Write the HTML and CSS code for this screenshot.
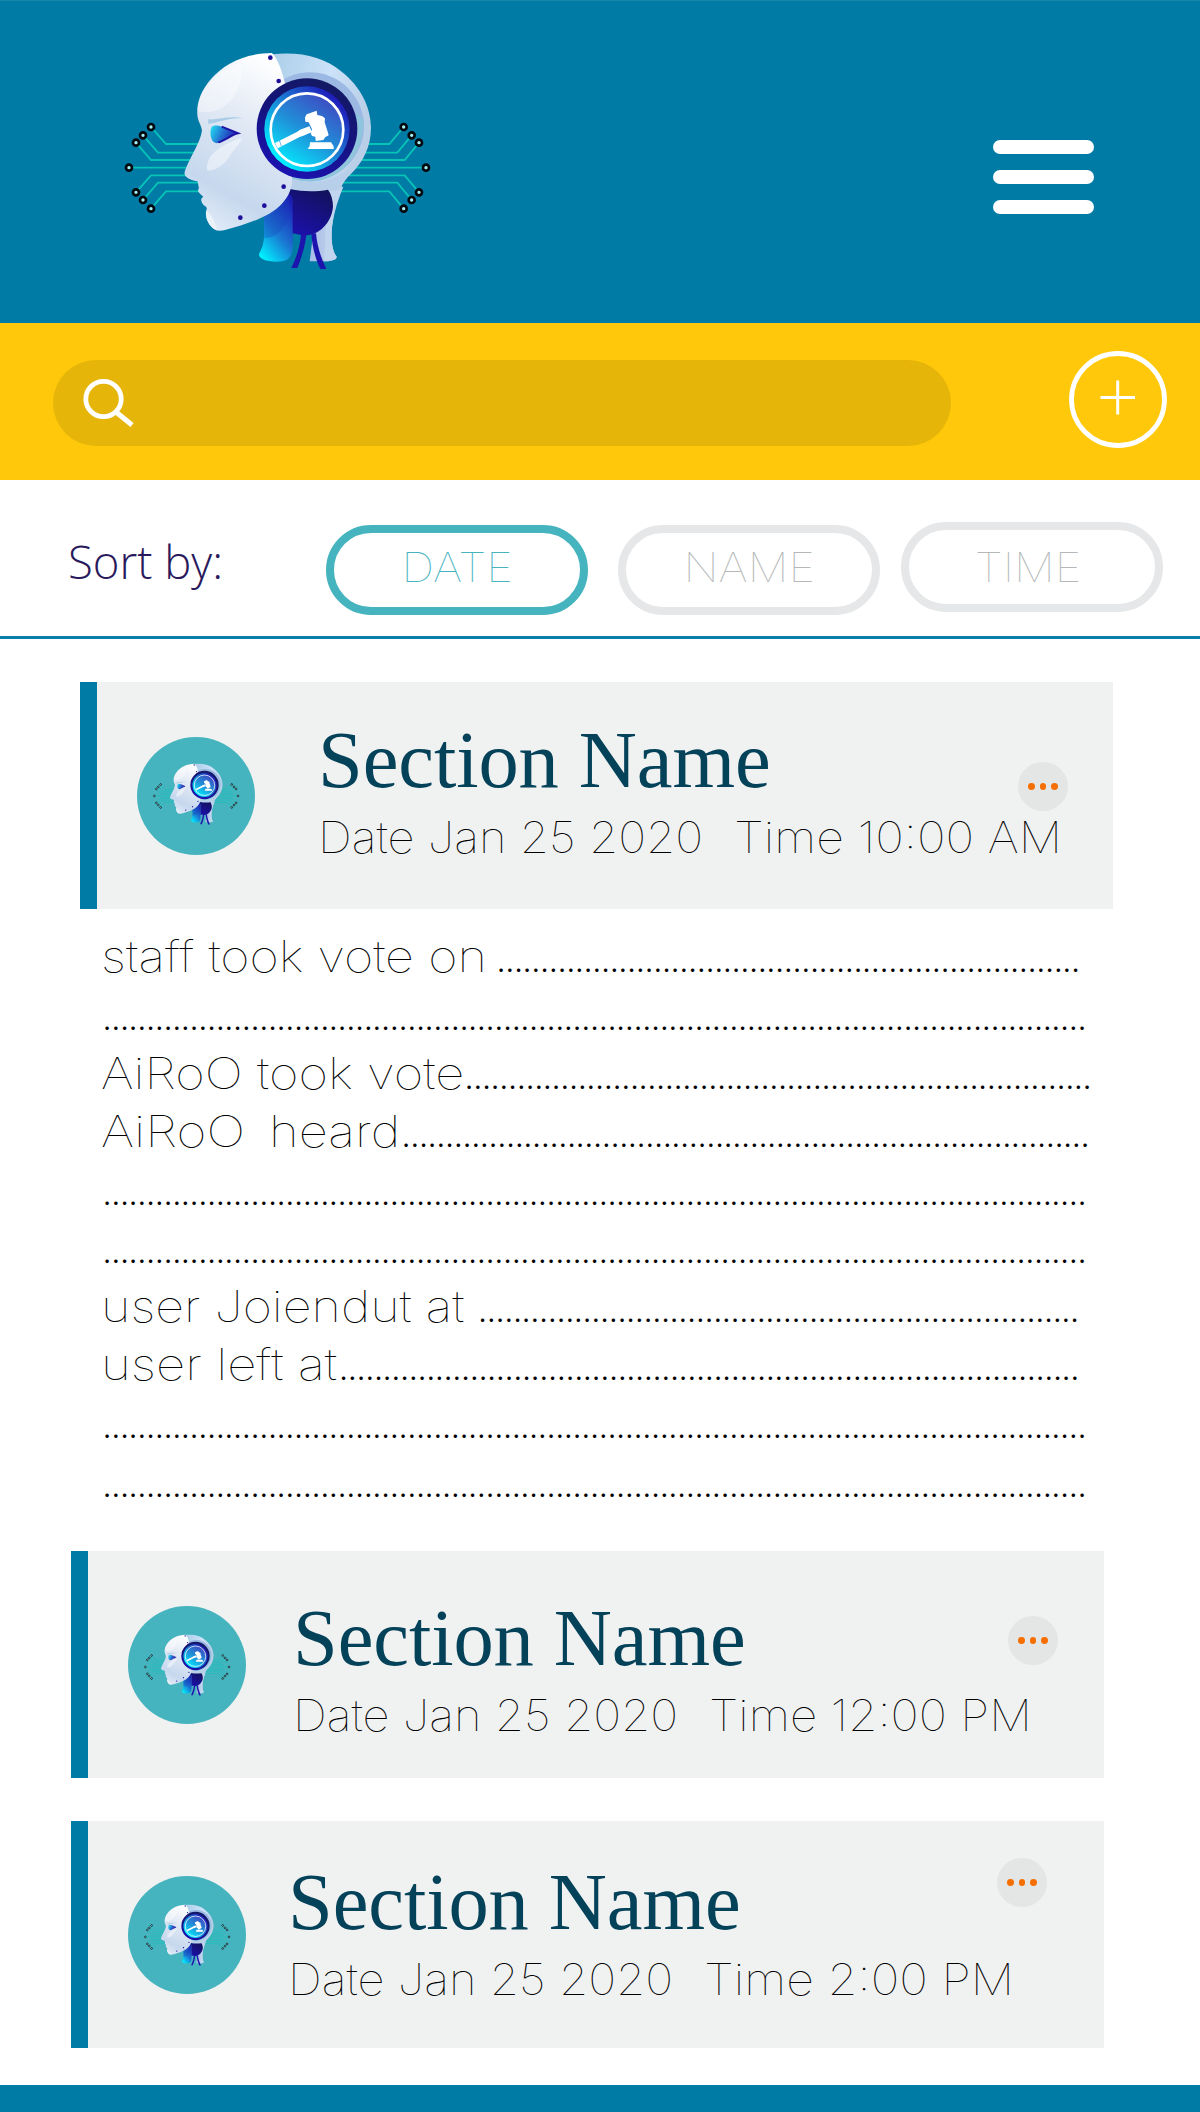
FILE: index.html
```html
<!DOCTYPE html>
<html lang="en">
<head>
<meta charset="utf-8">
<title>Sections</title>
<link rel="stylesheet" href="styles.css">
</head>
<body>
<svg class="defs" width="0" height="0" aria-hidden="true">
  <defs>
    <linearGradient id="face" x1="0.7" y1="0" x2="0.35" y2="1"><stop offset="0" stop-color="#fff"/><stop offset="0.45" stop-color="#dde6f3"/><stop offset="0.8" stop-color="#c6d8ee"/><stop offset="1" stop-color="#dfe9f6"/></linearGradient>
    <linearGradient id="skull" x1="0" y1="0" x2="1" y2="0.3"><stop offset="0" stop-color="#a9cce8"/><stop offset="0.6" stop-color="#cbe2f8"/><stop offset="1" stop-color="#b9cfe8"/></linearGradient>
    <linearGradient id="nape" x1="0" y1="0" x2="1" y2="0"><stop offset="0" stop-color="#a9bce8"/><stop offset="0.5" stop-color="#b9cbea"/><stop offset="1" stop-color="#c6d8ef"/></linearGradient>
    <linearGradient id="ring" x1="0.7" y1="0" x2="0.3" y2="1"><stop offset="0" stop-color="#131a62"/><stop offset="0.45" stop-color="#15137c"/><stop offset="1" stop-color="#1c12b4"/></linearGradient>
    <linearGradient id="lens" x1="0.85" y1="0.15" x2="0.15" y2="0.85"><stop offset="0" stop-color="#1f1cba"/><stop offset="0.5" stop-color="#1c83d6"/><stop offset="1" stop-color="#00f0ff"/></linearGradient>
    <linearGradient id="disc" x1="0.85" y1="0.15" x2="0.3" y2="1"><stop offset="0" stop-color="#3c50c4"/><stop offset="0.5" stop-color="#208fd8"/><stop offset="1" stop-color="#05e4fa"/></linearGradient>
    <linearGradient id="neck" x1="0.8" y1="0" x2="0.2" y2="1"><stop offset="0" stop-color="#1d18b4"/><stop offset="0.55" stop-color="#1a78d2"/><stop offset="1" stop-color="#00f0ff"/></linearGradient>
    <linearGradient id="jaw" x1="0.7" y1="0" x2="0.2" y2="1"><stop offset="0" stop-color="#12125e"/><stop offset="1" stop-color="#1c10ac"/></linearGradient>
    <linearGradient id="eye" x1="0" y1="0.3" x2="1" y2="0.6"><stop offset="0" stop-color="#22d2ee"/><stop offset="0.45" stop-color="#2470d0"/><stop offset="1" stop-color="#2112a8"/></linearGradient>
    <symbol id="robot" viewBox="0 0 990 720">
      <g class="trace">
        <path d="M123 261 168 312H300M99 286 144 338H300M78 308 123 360H300M57 383H300M78 457 123 406H300M99 480 144 428H300M123 506 168 454H300"/>
        <path d="M881 261 838 312H700M905 286 862 338H700M927 308 884 360H700M948 383H700M927 457 884 406H700M905 480 862 428H690M881 506 838 454H680"/>
      </g>
      <g class="node">
        <circle cx="123" cy="261" r="9"/><circle cx="99" cy="286" r="9"/><circle cx="78" cy="308" r="9"/><circle cx="57" cy="383" r="9"/><circle cx="78" cy="457" r="9"/><circle cx="99" cy="480" r="9"/><circle cx="123" cy="506" r="9"/>
        <circle cx="881" cy="261" r="9"/><circle cx="905" cy="286" r="9"/><circle cx="927" cy="308" r="9"/><circle cx="948" cy="383" r="9"/><circle cx="927" cy="457" r="9"/><circle cx="905" cy="480" r="9"/><circle cx="881" cy="506" r="9"/>
      </g>
      <path fill="url(#nape)" d="M600 440H696C680 480 668 530 665 575C664 610 668 635 680 650C680 660 660 664 635 664H599L612 560Z"/>
      <path fill="#c2d5ee" d="M655 440H700C680 490 668 530 665 575C664 610 668 635 680 650C680 660 660 664 641 664C650 600 645 560 655 440Z"/>
      <path fill="url(#skull)" d="M486 43C570 34 640 50 695 95C752 140 782 200 783 262C783 320 760 365 725 400C708 415 698 430 690 448C640 458 580 456 535 447L470 250Z"/>
      <circle cx="600" cy="259" r="162" fill="#9cb9e4"/>
      <path fill="#8ec4dc" d="M760 240C765 340 690 425 600 425C560 425 530 410 505 395L740 220Z"/>
      <path fill="#b7cfe8" d="M535 412C600 438 670 428 735 375C715 405 697 425 690 450C640 458 580 456 535 447Z"/>
      <path fill="url(#neck)" d="M462 490 535 460C545 463 549 475 549 495V600C549 650 540 665 500 665C465 665 445 655 447 642C460 620 464 600 462 560Z"/>
      <path fill="#1740b8" opacity=".3" d="M462 490 535 460 540 520C525 570 495 597 463 594Z"/>
      <path fill="url(#jaw)" d="M540 447C580 456 620 455 654 449C664 462 669 480 669 500C665 550 625 586 585 586C570 586 558 582 548 580V490C548 470 543 464 536 462Z"/>
      <path fill="#1d14ae" d="M573 584H589C585 620 574 654 562 684H544C560 652 570 618 573 584ZM604 580H618C621 616 632 652 649 687H631C616 656 606 618 604 580Z"/>
      <path fill="url(#face)" d="M486 39C400 40 340 75 305 115C270 155 260 190 262 225C264 245 274 255 276 272C270 310 240 350 225 392C219 408 232 419 262 424C266 432 264 438 267 444C262 450 264 456 270 461L280 470C270 475 273 485 280 494C286 500 292 500 290 508C284 525 290 545 305 562C315 574 330 573 345 570C410 553 480 530 515 492C540 465 547 440 546 412L525 130C515 90 505 60 486 39Z"/>
      <path fill="#fff" opacity=".4" d="M390 68C405 110 385 170 340 200C310 218 280 220 263 212C262 160 310 95 390 68Z"/>
      <path fill="#fff" opacity=".45" d="M398 294C370 300 310 325 296 360C288 380 290 393 296 392C320 390 345 372 358 350C368 330 390 312 398 294ZM288 510C305 525 315 545 322 572C300 562 284 540 288 510Z"/>
      <path fill="#a9cde6" d="M294 238C330 240 360 225 402 236C365 230 330 246 295 252Z"/>
      <path fill="url(#eye)" d="M305 261C312 255 325 256 335 260L384 280C362 285 345 302 325 309C315 311 308 306 305 298C300 286 300 270 305 261Z"/>
      <path fill="none" stroke="#1d12a4" stroke-width="6" d="M335 260 384 280C362 285 345 302 325 307"/>
      <circle cx="591" cy="266" r="151" fill="url(#ring)"/>
      <circle cx="591" cy="267" r="128" fill="url(#lens)"/>
      <circle cx="591" cy="269" r="109" fill="url(#disc)" stroke="#fff" stroke-width="8"/>
      <g fill="#fff">
        <path d="M495 309 562 275 570 269 598 259 606 276 580 287 569 291 503 325Z"/>
        <path d="M585 232 590 223 620 212 622 225 636 228 645 235 644 247 654 278 656 286 651 289 646 291 640 300 617 303 616 290 606 288 602 280 606 268 596 247 586 245Z"/>
        <path d="M600 307H663L671 319V327H593L599 318Z"/>
      </g>
      <path stroke="#2a8fd8" stroke-width="2" d="M508 301 514 318"/>
      <g fill="#1d0e9c"><circle cx="481" cy="53" r="7"/><circle cx="506" cy="123" r="7"/><circle cx="521" cy="440" r="7"/><circle cx="463" cy="497" r="7"/><circle cx="391" cy="533" r="7"/></g>
    </symbol>
  </defs>
</svg>

<header class="topbar">
  <svg class="logo" viewBox="0 0 990 720"><use href="#robot"/></svg>
  <div class="burger"><span></span><span></span><span></span></div>
</header>

<div class="searchbar">
  <div class="search">
    <svg width="44" height="44" viewBox="0 0 44 44" fill="none" stroke="#fff"><circle cx="20.5" cy="21" r="17.7" stroke-width="4.8"/><path d="M33 34 49 47" stroke-width="5"/></svg>
  </div>
  <svg class="add" viewBox="0 0 98 97" fill="none" stroke="#fff"><ellipse cx="49" cy="48.5" rx="46.5" ry="46" stroke-width="4.8"/><path d="M31.5 46.5H66M48.7 29.5V63.5" stroke-width="3"/></svg>
</div>

<div class="sortbar">
  <span class="sort-label">Sort by:</span>
  <span class="chip active"><span>DATE</span></span>
  <span class="chip"><span>NAME</span></span>
  <span class="chip time"><span>TIME</span></span>
</div>

<main>
  <section class="card first">
    <div class="avatar"><svg viewBox="0 0 990 720"><use href="#robot"/></svg></div>
    <div class="info">
      <div class="head"><h2>Section Name</h2><div class="more"><i></i><i></i><i></i></div></div>
      <p class="meta"><span class="date">Date Jan 25 2020</span><span class="hour">Time 10:00 AM</span></p>
    </div>
  </section>

  <div class="log">
    <p><span class="t1">staff took vote on</span><span class="dots">...................................................................</span></p>
    <p><span class="dots">.................................................................................................................</span></p>
    <p><span class="t3">AiRoO took vote</span><span class="dots">........................................................................</span></p>
    <p><span class="t4">AiRoO</span><span class="t4b">heard</span><span class="dots">...............................................................................</span></p>
    <p><span class="dots">.................................................................................................................</span></p>
    <p><span class="dots">.................................................................................................................</span></p>
    <p><span class="t7">user Joiendut at</span><span class="dots">.....................................................................</span></p>
    <p><span class="t8">user left at</span><span class="dots">.....................................................................................</span></p>
    <p><span class="dots">.................................................................................................................</span></p>
    <p><span class="dots">.................................................................................................................</span></p>
  </div>

  <section class="card second">
    <div class="avatar"><svg viewBox="0 0 990 720"><use href="#robot"/></svg></div>
    <div class="info">
      <div class="head"><h2>Section Name</h2><div class="more"><i></i><i></i><i></i></div></div>
      <p class="meta"><span class="date">Date Jan 25 2020</span><span class="hour">Time 12:00 PM</span></p>
    </div>
  </section>

  <section class="card third">
    <div class="avatar"><svg viewBox="0 0 990 720"><use href="#robot"/></svg></div>
    <div class="info">
      <div class="head"><h2>Section Name</h2><div class="more"><i></i><i></i><i></i></div></div>
      <p class="meta"><span class="date">Date Jan 25 2020</span><span class="hour">Time 2:00 PM</span></p>
    </div>
  </section>
</main>
<footer></footer>
</body>
</html>
```
FILE: styles.css
```css
* { box-sizing: border-box; }
body { margin: 0; width: 1200px; height: 2112px; background: #fff; display: flex; flex-direction: column; overflow: hidden; font-family: Inter, sans-serif; font-weight: 100; color: #000; }
h2, p { margin: 0; }
svg { display: block; }
.defs { position: absolute; }

.topbar { height: 323px; flex: none; background: #007ba5; border-top: 1px solid #1a88ae; display: flex; justify-content: space-between; align-items: flex-start; padding: 39px 106px 0 110px; }
.logo { width: 330px; height: 240px; }
.trace { fill: none; stroke: #06c4b8; stroke-width: 5.5; }
.node { fill: #a6f0f4; stroke: #04080f; stroke-width: 8; }
.burger { width: 101px; margin-top: 100px; display: flex; flex-direction: column; gap: 16px; }
.burger span { height: 14px; border-radius: 7px; background: #fff; }

.searchbar { height: 157px; flex: none; background: #ffc80a; display: flex; justify-content: space-between; align-items: flex-start; padding: 28px 33px 0 53px; }
.search { width: 898px; height: 86px; margin-top: 9px; border-radius: 43px; background: #e6b509; padding: 18px 0 0 30px; }
.search svg { overflow: visible; }
.add { width: 98px; height: 97px; }

.sortbar { height: 159px; flex: none; border-bottom: 3px solid #0a7ea8; display: flex; align-items: flex-start; padding-left: 68px; }
.sort-label { width: 258px; margin-top: 51px; font: 300 45.5px/60px "Open Sans", sans-serif; color: #2a1a5c; }
.chip { width: 262px; height: 90px; margin: 45px 30px 0 0; border: 8px solid #e6e7e8; border-radius: 45px; font-size: 41px; line-height: 68px; text-align: center; color: #b4b8b8; }
.chip span { display: inline-block; transform: scaleX(1.11); }
.chip.active { border-color: #46b4be; color: #46b4be; }
.chip.time { margin: 42px 0 0 -9px; line-height: 74px; padding-right: 7px; }

main { flex: none; height: 1446px; padding-top: 43px; }
.card { width: 1033px; height: 227px; background: #f0f1f1; border-left: 17px solid #007ba5; display: flex; }
.first { margin-left: 80px; --pad: 38px; }
.second { margin-left: 71px; --pad: 47px; }
.third { margin: 43px 0 0 71px; --pad: 41px; }
.avatar { flex: none; width: 118px; height: 118px; margin: 54.5px 0 0 40px; border-radius: 50%; background: #46b4be; padding: 23px 0 0 12px; }
.avatar svg { width: 93px; height: 67.6px; }
.second .avatar, .third .avatar { padding-top: 25px; }
.avatar .trace { stroke-width: 4; }
.info { flex: 1; padding: var(--pad) 45px 0 0; }
.first .info { margin-left: 63px; }
.second .info { margin-left: 47px; }
.third .info { margin-left: 42px; }
.head { height: 80px; display: flex; justify-content: space-between; align-items: flex-start; }
h2 { font: 400 80.5px/80px "Liberation Serif", serif; letter-spacing: -.1px; color: #04425a; white-space: nowrap; }
.more { width: 50px; height: 49px; border-radius: 50%; background: #e3e6e5; display: flex; align-items: center; justify-content: center; gap: 4.4px; }
.more i { width: 6.8px; height: 6.8px; border-radius: 50%; background: #f56f00; }
.first .more { margin-top: 42px; }
.second .more { margin-top: 18px; margin-right: 1px; }
.third .more { margin-top: -4px; margin-right: 12px; }
.meta { margin-top: 7px; font-size: 44px; line-height: 60px; white-space: nowrap; display: flex; font-weight: 130; }
.meta span, .log span:not(.dots) { flex: none; transform-origin: 0 50%; }
.date { width: 416px; transform: scaleX(1.072); }
.hour { transform: scaleX(1.1); }
.second .hour { transform: scaleX(1.083); }

.log { height: 642px; padding: 18px 0 0 101px; font-size: 44px; line-height: 58.4px; font-weight: 130; }
.log p { display: flex; height: 58.3px; white-space: nowrap; }
.dots { letter-spacing: -3.455px; font-weight: 200; }
.t1 { width: 394px; transform: scaleX(1.147); }
.t3 { width: 362px; transform: scaleX(1.156); }
.t4 { width: 168px; transform: scaleX(1.174); }
.t4b { width: 131px; transform: scaleX(1.155); }
.t7 { width: 375.6px; transform: scaleX(1.144); }
.t8 { width: 236.6px; transform: scaleX(1.16); }

footer { flex: 1; background: #007ba5; }
```
